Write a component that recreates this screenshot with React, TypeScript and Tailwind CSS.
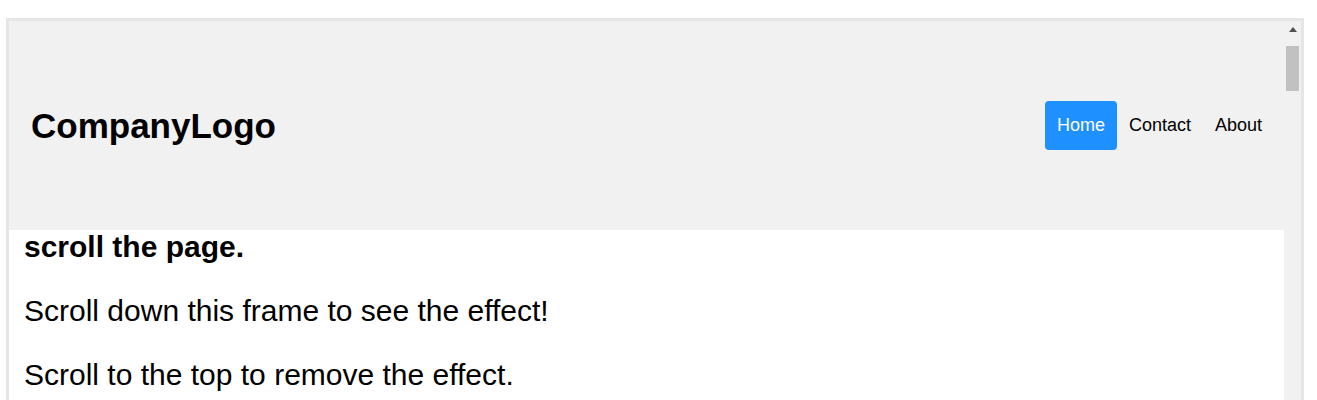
export default function App() {
  const links = [
    { label: 'Home', active: true },
    { label: 'Contact', active: false },
    { label: 'About', active: false },
  ];

  return (
    <div className="h-[400px] overflow-hidden bg-white pt-[18px] pl-[6px] pr-[13px] font-['Liberation_Sans',Arial,sans-serif]">
      <div className="flex h-[500px] border-[3px] border-[#e6e6e6] bg-[#f1f1f1]">
        {/* page inside the frame */}
        <div className="flex w-[1275px] flex-col">
          <header className="flex h-[209px] items-center justify-between bg-[#f1f1f1] px-[10px]">
            <a className="p-[12px] text-[35px] font-bold leading-[25px] text-black">CompanyLogo</a>
            <nav className="flex">
              {links.map((l) => (
                <a
                  key={l.label}
                  className={
                    l.active
                      ? 'rounded-[4px] bg-[#1e90ff] p-[12px] text-[18px] leading-[25px] text-white'
                      : 'rounded-[4px] p-[12px] text-[18px] leading-[25px] text-black'
                  }
                >
                  {l.label}
                </a>
              ))}
            </nav>
          </header>
          <main className="flex-1 bg-white px-[15px] text-[30px] leading-[1.15] text-black">
            <p className="font-bold">scroll the page.</p>
            <p className="mt-[29px]">Scroll down this frame to see the effect!</p>
            <p className="mt-[30px]">Scroll to the top to remove the effect.</p>
          </main>
        </div>
        {/* scrollbar */}
        <div className="flex w-[17px] flex-col items-center bg-[#f1f1f1]">
          <div className="flex h-[17px] w-full items-center justify-center">
            <svg width="8" height="5" viewBox="0 0 8 5">
              <path d="M0 5 L4 0 L8 5 Z" fill="#505050" />
            </svg>
          </div>
          <div className="mt-[8px] h-[45px] w-[13px] bg-[#c1c1c1]" />
        </div>
      </div>
    </div>
  );
}
